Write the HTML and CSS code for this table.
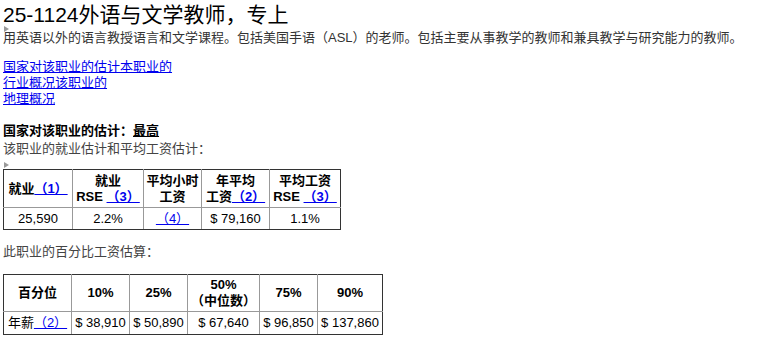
FILE: index.html
```html
<!DOCTYPE html>
<html lang="zh-CN">
<head>
<meta charset="utf-8">
<title>25-1124外语与文学教师，专上</title>
<link rel="stylesheet" href="styles.css">
</head>
<body>
<h1 class="title">25-1124外语与文学教师，专上</h1>
<p class="desc"><span class="tri tri-over"></span>用英语以外的语言教授语言和文学课程。包括美国手语（ASL）的老师。包括主要从事教学的教师和兼具教学与研究能力的教师。</p>
<div class="links"><a href="#">国家对该职业的估计</a><a href="#">本职业的<br>行业概况</a><a href="#">该职业的<br>地理概况</a></div>

<h2 class="heading">国家对该职业的估计：<span class="ul">最高</span></h2>
<p class="sub">该职业的就业估计和平均工资估计：</p>
<div class="tri tri-flow"></div>
<table class="grid grid-emp">
  <colgroup><col class="c69"><col class="c71"><col class="c58"><col class="c68"><col class="c71"></colgroup>
  <thead>
    <tr>
      <th>就业<a href="#">（1）</a></th>
      <th>就业<br>RSE <a href="#">（3）</a></th>
      <th>平均小时<br>工资</th>
      <th>年平均<br>工资<a href="#">（2）</a></th>
      <th>平均工资<br>RSE <a href="#">（3）</a></th>
    </tr>
  </thead>
  <tbody>
    <tr>
      <td>25,590</td>
      <td>2.2%</td>
      <td><a href="#">（4）</a></td>
      <td>$ 79,160</td>
      <td>1.1%</td>
    </tr>
  </tbody>
</table>

<p class="sub sub2">此职业的百分比工资估算：</p>
<table class="grid grid-pct">
  <colgroup><col class="c68"><col class="c58"><col class="c58"><col class="c72"><col class="c58"><col class="c65"></colgroup>
  <thead>
    <tr>
      <th>百分位</th>
      <th>10%</th>
      <th>25%</th>
      <th>50%<br>（中位数）</th>
      <th>75%</th>
      <th>90%</th>
    </tr>
  </thead>
  <tbody>
    <tr>
      <td>年薪<a href="#">（2）</a></td>
      <td>$ 38,910</td>
      <td>$ 50,890</td>
      <td>$ 67,640</td>
      <td>$ 96,850</td>
      <td>$ 137,860</td>
    </tr>
  </tbody>
</table>
</body>
</html>
```

FILE: styles.css
```css
html, body {
  margin: 0;
  padding: 0;
  background: #ffffff;
}
body {
  padding-left: 3px;
  font-family: "Liberation Sans", "Noto Sans CJK SC", sans-serif;
  font-size: 13px;
  line-height: 16px;
  color: #000000;
}
a {
  color: #0000ee;
  text-decoration: underline;
}
.title {
  margin: 0;
  font-size: 21px;
  font-weight: normal;
  line-height: 30px;
  color: #000000;
}
.desc {
  position: relative;
  margin: 0;
  color: #333333;
}
.tri {
  width: 0;
  height: 0;
  border-left: 5px solid #9a9a9a;
  border-top: 3.5px solid transparent;
  border-bottom: 3.5px solid transparent;
}
.tri-over {
  position: absolute;
  left: 1px;
  top: -4px;
}
.tri-flow {
  display: block;
  margin: 5px 0 1px 1px;
}
.links {
  margin-top: 13px;
  width: 175px;
}
.heading {
  margin: 16px 0 0 0;
  font-size: 13px;
  line-height: 16px;
  font-weight: bold;
}
.ul {
  text-decoration: underline;
}
.sub {
  margin: 2px 0 0 0;
  color: #444444;
}
.sub2 {
  margin-top: 14px;
}
.grid {
  border-collapse: collapse;
  table-layout: fixed;
  border: 1px solid #333333;
}
.grid-emp {
  width: 338px;
}
.grid-pct {
  margin-top: 14px;
  width: 380px;
}
.grid th,
.grid td {
  border: 1px solid #999999;
  padding: 0 1px;
  text-align: center;
  vertical-align: middle;
  white-space: nowrap;
  line-height: 16px;
}
.grid th {
  font-weight: bold;
}
.grid-emp thead th {
  height: 37px;
  padding-top: 0;
  padding-bottom: 0;
}
.grid-emp tbody td {
  height: 21px;
}
.grid-pct thead th {
  height: 36px;
}
.grid-pct tbody td {
  height: 22px;
}
.grid tr:first-child th {
  border-top-color: #333333;
}
.grid tr > :first-child {
  border-left-color: #333333;
}
.grid tr > :last-child {
  border-right-color: #333333;
}
.grid tbody tr:last-child td {
  border-bottom-color: #333333;
}
.c58 { width: 58px; }
.c65 { width: 65px; }
.c68 { width: 68px; }
.c69 { width: 69px; }
.c71 { width: 71px; }
.c72 { width: 72px; }
```
